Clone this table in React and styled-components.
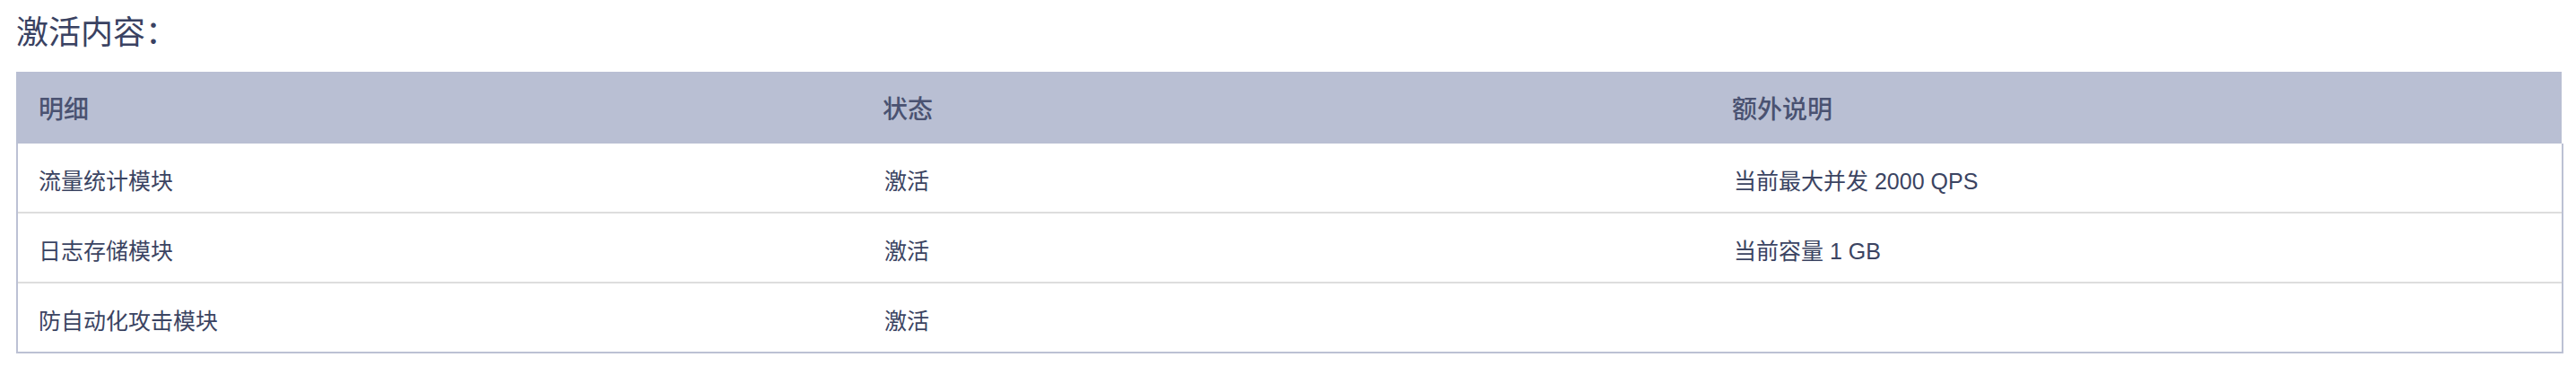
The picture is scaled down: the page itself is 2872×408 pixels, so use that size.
import styled, { createGlobalStyle } from "styled-components";

const GlobalStyle = createGlobalStyle`
  body {
    margin: 0;
    background: #ffffff;
    font-family: "Liberation Sans", "Noto Sans CJK SC", sans-serif;
    color: #3b4462;
  }
`;

const rows = [
  { name: "流量统计模块", status: "激活", note: "当前最大并发 2000 QPS" },
  { name: "日志存储模块", status: "激活", note: "当前容量 1 GB" },
  { name: "防自动化攻击模块", status: "激活", note: "" },
];

const Page = styled.div`
  padding: 10px 16px 14px 18px;
`;

const Title = styled.h2`
  margin: 0 0 16px;
  font-size: 36px;
  line-height: 54px;
  font-weight: 400;
  color: #3a4262;
`;

const Table = styled.div`
  width: 100%;
`;

const Row = styled.div`
  display: grid;
  grid-template-columns: 942px 947px 1fr;
  align-items: center;
  height: ${({ $head }) => ($head ? "80px" : "76px")};
  background: ${({ $head }) => ($head ? "#b9bfd3" : "#ffffff")};
  border-bottom: ${({ $head }) => ($head ? "none" : "2px solid #dddddd")};
  &:last-child {
    border-bottom: none;
  }
`;

const Body = styled.div`
  border: 2px solid #bcc1d4;
  border-top: none;
  margin-right: -2px;
`;

const Cell = styled.div`
  padding-left: ${({ $indent }) => $indent || "24px"};
  padding-top: ${({ $head }) => ($head ? "0" : "4px")};
  font-size: ${({ $head }) => ($head ? "28px" : "25px")};
  font-weight: ${({ $head }) => ($head ? 500 : 400)};
  color: ${({ $head }) => ($head ? "#4a5271" : "#3b4462")};
  white-space: nowrap;
`;

export default function App() {
  return (
    <Page>
      <GlobalStyle />
      <Title>激活内容：</Title>
      <Table>
        <Row $head>
          <Cell $head $indent="25px">明细</Cell>
          <Cell $head>状态</Cell>
          <Cell $head>额外说明</Cell>
        </Row>
        <Body>
          {rows.map((r) => (
            <Row key={r.name}>
              <Cell $indent="23px">{r.name}</Cell>
              <Cell>{r.status}</Cell>
              <Cell>{r.note}</Cell>
            </Row>
          ))}
        </Body>
      </Table>
    </Page>
  );
}
